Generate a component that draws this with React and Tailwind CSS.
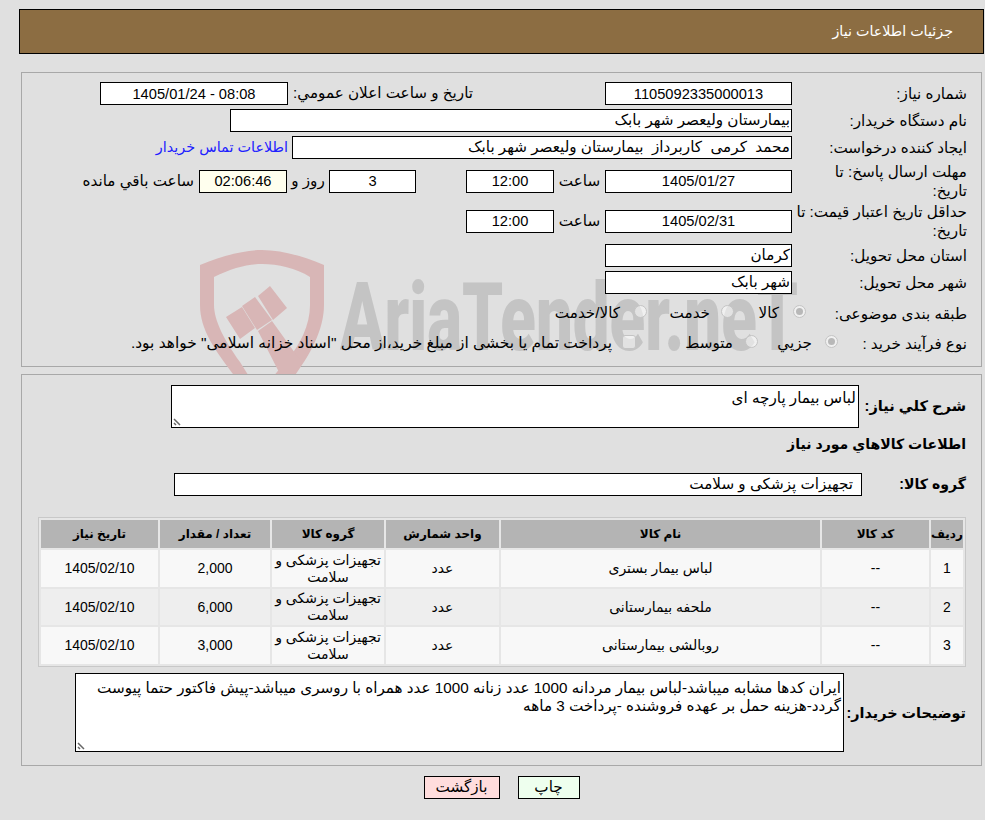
const inputBox = "bg-white border border-black h-[23px] flex items-center shrink-0";
const digits = "text-[14.67px]";

function Field({ className = "", children, ...rest }) {
  return (
    <div className={`${inputBox} ${className}`} {...rest}>
      {children}
    </div>
  );
}

function Radio({ checked }) {
  return (
    <span className="w-[13px] h-[13px] rounded-full border border-[#c4c4c4] bg-white/50 flex items-center justify-center shrink-0 -mt-[3px]">
      {checked && <span className="w-[7px] h-[7px] rounded-full bg-[#b8b8b8]" />}
    </span>
  );
}

function Watermark() {
  return (
    <svg
      className="absolute left-[176px] top-[175px] pointer-events-none [direction:ltr]"
      width="620"
      height="130"
      viewBox="198 248 620 130"
    >
      {/* shield */}
      <path
        d="M200 265 C225 255 245 250 262 250 C280 250 300 255 324 265 L324 305 C324 330 310 355 293 378 L236 378 C215 350 200 330 200 305 Z M214 277 L214 305 C214 320 224 340 240 362 L250 378 L272 378 L287 360 C300 345 310 325 310 305 L310 277 C296 268 278 264 262 264 C248 264 232 268 214 277 Z"
        fill="#d8b6b6"
        fillRule="evenodd"
      />
      {/* gavel */}
      <path
        d="M226 317 L242 307 L255 328 L240 339 Z M242 306 L255 297 L272 320 L257 330 Z M258 296 L270 286 L287 308 L273 320 Z M258 331 L272 321 L300 360 L282 378 Z"
        fill="#d8b6b6"
      />
      {/* logo word */}
      <text
        x="340"
        y="350"
        fontFamily="Roboto, sans-serif"
        fontWeight="900"
        fontSize="94"
        textLength="458"
        lengthAdjust="spacingAndGlyphs"
        fill="#c4c4c4"
      >
        AriaTender.neT
      </text>
    </svg>
  );
}

function FormRow({ label, labelWidth = "w-[175px]", className = "", children }) {
  return (
    <div className={`flex items-center ${className}`}>
      <div className={`${labelWidth} shrink-0 leading-[19px]`}>{label}</div>
      {children}
    </div>
  );
}

const tableRows = [
  { id: "1", name: "لباس بیمار بستری", qty: "2,000", bg: "bg-[#f8f8f8]", h: "h-[37px]" },
  { id: "2", name: "ملحفه بیمارستانی", qty: "6,000", bg: "bg-[#eeeeee]", h: "h-[36px]" },
  { id: "3", name: "روبالشی بیمارستانی", qty: "3,000", bg: "bg-[#f8f8f8]", h: "h-[37px]" },
];

const cols = "grid grid-cols-[32px_107px_319px_113px_112px_110px_117px] gap-[2px]";

export default function App() {
  return (
    <div
      dir="rtl"
      className="w-[985px] h-[820px] bg-[#e0e0e0] overflow-hidden pt-[9px] pl-[19px] pr-[1px] font-['Liberation_Sans','DejaVu_Sans',sans-serif] text-[15.2px] text-black"
    >
      {/* header bar */}
      <div className="h-[45px] bg-[#8c6d42] border border-black flex items-center pr-[30px] text-white text-[14.3px]">
        جزئیات اطلاعات نیاز
      </div>

      {/* first panel */}
      <div className="relative mt-[18px] mx-[2px] h-[295px] border border-[#a8a8a8] pt-[9px] pr-[14px]">
        <Watermark />
        <div className="relative flex flex-col">
          <FormRow label="شماره نیاز:" className="h-[23px]">
            <Field className={`w-[187px] justify-center ${digits}`}>1105092335000013</Field>
            <div className="w-[185px] mr-[132px] whitespace-nowrap shrink-0">تاریخ و ساعت اعلان عمومي:</div>
            <Field className={`w-[188px] justify-center ${digits}`} dir="ltr">
              1405/01/24 - 08:08
            </Field>
          </FormRow>
          <FormRow label="نام دستگاه خریدار:" className="h-[23px] mt-[4px]">
            <Field className="w-[562px] pr-[1px]">بیمارستان ولیعصر شهر بابک</Field>
          </FormRow>
          <FormRow label="ایجاد کننده درخواست:" className="h-[23px] mt-[4px]">
            <Field className="w-[500px] pr-[1px] whitespace-pre">محمد  کرمی  کاربرداز  بیمارستان ولیعصر شهر بابک</Field>
            <a className="mr-[4px] text-[#2020ff] whitespace-nowrap text-[14.4px]">اطلاعات تماس خریدار</a>
          </FormRow>
          <FormRow label="مهلت ارسال پاسخ: تا تاریخ:" labelWidth="w-[175px] pl-[22px]" className="h-[38px] mt-[3px]">
            <Field className={`w-[187px] justify-center h-[22px] ${digits}`}>1405/01/27</Field>
            <span className="w-[51px] text-center shrink-0">ساعت</span>
            <Field className={`w-[88px] justify-center h-[22px] ${digits}`}>12:00</Field>
            <Field className={`w-[87px] justify-center h-[22px] mr-[50px] ${digits}`}>3</Field>
            <span className="w-[42px] text-center whitespace-nowrap shrink-0">روز و</span>
            <Field className={`w-[88px] justify-center h-[22px] !bg-[#ffffee] ${digits}`}>02:06:46</Field>
            <span className="mr-[5px] whitespace-nowrap">ساعت باقي مانده</span>
          </FormRow>
          <FormRow label="حداقل تاریخ اعتبار قیمت: تا تاریخ:" className="h-[38px] mt-[2px]">
            <Field className={`w-[187px] justify-center ${digits}`}>1405/02/31</Field>
            <span className="w-[51px] text-center shrink-0">ساعت</span>
            <Field className={`w-[88px] justify-center ${digits}`}>12:00</Field>
          </FormRow>
          <FormRow label="استان محل تحویل:" className="h-[23px] mt-[4px]">
            <Field className="w-[187px] pr-[1px]">کرمان</Field>
          </FormRow>
          <FormRow label="شهر محل تحویل:" className="h-[23px] mt-[4px]">
            <Field className="w-[187px] pr-[1px]">شهر بابک</Field>
          </FormRow>
          <FormRow label="طبقه بندی موضوعی:" labelWidth="w-[161px]" className="h-[22px] mt-[8px]">
            <Radio checked />
            <span className="mr-[14px] w-[45px] shrink-0">کالا</span>
            <Radio />
            <span className="mr-[11px] w-[63px] shrink-0">خدمت</span>
            <Radio />
            <span className="mr-[14px] whitespace-nowrap">کالا/خدمت</span>
          </FormRow>
          <FormRow label="نوع فرآیند خرید :" labelWidth="w-[129px]" className="h-[22px] mt-[8px]">
            <Radio checked />
            <span className="mr-[13px] w-[54px] shrink-0">جزیي</span>
            <Radio />
            <span className="mr-[12px] w-[97px] shrink-0">متوسط</span>
            <span className="w-[14px] h-[14px] rounded-[3px] border border-[#c4c4c4] bg-white/50 shrink-0 -mt-[2px]" />
            <span className="mr-[10px] whitespace-nowrap text-[15.45px]">پرداخت تمام یا بخشی از مبلغ خرید،از محل "اسناد خزانه اسلامی" خواهد بود.</span>
          </FormRow>
        </div>
      </div>

      {/* second panel */}
      <div className="relative mt-[7px] mx-[2px] h-[392px] bg-[#e0e0e0] border border-[#a8a8a8] pt-[10px] pr-[15px] pl-[16px] flex flex-col">
        <div className="flex">
          <div className="w-[107px] pt-[11px] font-bold text-[14.6px] shrink-0 whitespace-nowrap">شرح کلي نیاز:</div>
          <div className="relative w-[688px] h-[43px] bg-white border border-black pr-[2px] pt-[3px] leading-[18px]">
            لباس بیمار پارچه ای
            <ResizeGrip />
          </div>
        </div>
        <div className="mt-[5px] font-bold text-[14.1px] h-[22px] leading-[22px]">اطلاعات کالاهاي مورد نیاز</div>
        <div className="flex items-center mt-[18px]">
          <div className="w-[104px] font-bold text-[14.1px] shrink-0">گروه کالا:</div>
          <Field className="w-[688px] pr-[8px]">تجهیزات پزشکی و سلامت</Field>
        </div>

        {/* goods table */}
        <div className="mt-[21px] border border-[#c8c8c8] p-[2px] bg-[#e6e6e6] text-[14px]">
          <div className={cols}>
            {["ردیف", "کد کالا", "نام کالا", "واحد شمارش", "گروه کالا", "تعداد / مقدار", "تاریخ نیاز"].map((h) => (
              <div key={h} className="h-[28px] bg-[#b4b4b4] font-bold text-[12px] flex items-center justify-center whitespace-nowrap">
                {h}
              </div>
            ))}
          </div>
          {tableRows.map((r) => (
            <div key={r.id} className={`${cols} mt-[2px]`}>
              <div className={`${r.bg} ${r.h} flex items-center justify-center`}>{r.id}</div>
              <div className={`${r.bg} flex items-center justify-center`}>--</div>
              <div className={`${r.bg} flex items-center justify-center`}>{r.name}</div>
              <div className={`${r.bg} flex items-center justify-center`}>عدد</div>
              <div className={`${r.bg} flex items-center justify-center text-center leading-[17px] px-[2px]`}>تجهیزات پزشکی و سلامت</div>
              <div className={`${r.bg} flex items-center justify-center`}>{r.qty}</div>
              <div className={`${r.bg} flex items-center justify-center`}>1405/02/10</div>
            </div>
          ))}
        </div>

        <div className="flex mt-[6px]">
          <div className="w-[122px] pt-[30px] font-bold text-[14.4px] shrink-0 whitespace-nowrap">توضیحات خریدار:</div>
          <div className="relative w-[769px] h-[79px] bg-white border border-black pr-[2px] pl-[19px] pt-[5px] leading-[18px]">
            ایران کدها مشابه میباشد-لباس بیمار مردانه 1000 عدد زنانه 1000 عدد همراه با روسری میباشد-پیش فاکتور حتما پیوست گردد-هزینه حمل بر عهده فروشنده -پرداخت 3 ماهه
            <ResizeGrip />
          </div>
        </div>
      </div>

      {/* buttons */}
      <div className="flex justify-center gap-[18px] mt-[10px]">
        <button className="w-[62px] h-[23px] bg-[#eeffee] border border-black flex items-center justify-center">چاپ</button>
        <button className="w-[76px] h-[23px] bg-[#ffdddd] border border-black flex items-center justify-center">بازگشت</button>
      </div>
    </div>
  );
}

function ResizeGrip() {
  return (
    <svg className="absolute left-[1px] bottom-[1px]" width="10" height="10" viewBox="0 0 10 10">
      <path d="M1 3 L7 9 M1 7 L3 9" stroke="#666666" strokeWidth="1.5" fill="none" />
    </svg>
  );
}
